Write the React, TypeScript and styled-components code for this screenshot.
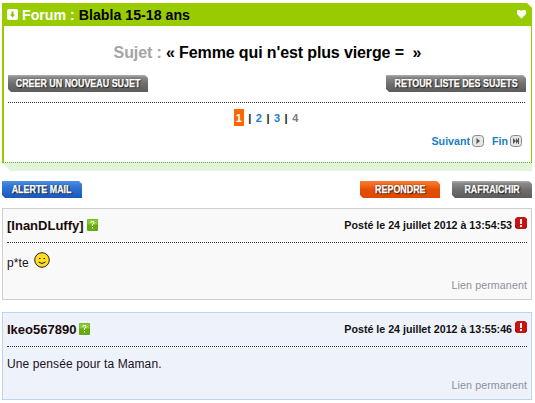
import React from 'react';
import styled, { createGlobalStyle } from 'styled-components';

const Global = createGlobalStyle`
  html, body { margin: 0; padding: 0; background: #fff; }
  body { font-family: "Liberation Sans", Arial, sans-serif; font-size: 12px; color: #000; }
`;

const Page = styled.div`
  width: 535px;
  height: 403px;
  overflow: hidden;
  padding: 3px 3px 0 2px;
  box-sizing: border-box;
`;

const Forum = styled.section`
  background: #e2f6db;
  padding-bottom: 8px;
  clip-path: polygon(0 0, calc(100% - 5px) 0, 100% 5px, 100% 100%, 8px 100%, 0 calc(100% - 8px));
`;

const ForumInner = styled.div`
  background: #fff;
  border-left: 2px solid #99cc00;
  border-right: 1px solid #99cc00;
  border-bottom: 1px dotted #33cc00;
  height: 160px;
  box-sizing: border-box;
`;

const ForumBar = styled.h1`
  margin: 0;
  height: 23px;
  margin-left: -2px;
  margin-right: -1px;
  padding: 0 6px 0 5px;
  background: #99cc00;
  display: flex;
  align-items: center;
  gap: 4px;
  font-size: 14.2px;
  font-weight: bold;
  color: #000;
`;

const Spacer = styled.span`
  flex: 1;
`;

const White = styled.span`
  color: #fff;
`;

const Subject = styled.h2`
  margin: 0;
  padding-top: 17px;
  height: 32px;
  box-sizing: content-box;
  text-align: center;
  font-size: 16px;
  line-height: 20px;
  font-weight: bold;
  letter-spacing: -0.12px;
  white-space: pre;
`;

const Grey = styled.span`
  color: #a5a5a5;
`;

const Row = styled.div<{ $gap?: number }>`
  display: flex;
  align-items: center;
  gap: ${(p) => p.$gap ?? 0}px;
`;

const ForumActions = styled(Row)`
  justify-content: space-between;
  padding: 0 5px 0 4px;
`;

const ActionBar = styled(Row)`
  margin-top: 10px;
  height: 17px;
`;

const Button = styled.a<{ $kind: 'grey' | 'orange' | 'blue'; $w: number }>`
  display: flex;
  align-items: center;
  justify-content: center;
  box-sizing: border-box;
  width: ${(p) => p.$w}px;
  height: 17px;
  flex: none;
  clip-path: polygon(0 0, calc(100% - 3px) 0, 100% 3px, 100% 100%, 3px 100%, 0 calc(100% - 3px));
  background: ${(p) =>
    p.$kind === 'grey'
      ? 'linear-gradient(#b0b0b0 0, #8c8c8c 2px, #6e6e6e 9px, #5c5c5c 100%)'
      : p.$kind === 'orange'
      ? 'linear-gradient(#ff7a33 0, #f26a1d 4px, #e04d00 9px, #e04a00 100%)'
      : 'linear-gradient(#4d8fe6 0, #2f74d6 6px, #1a57b8 100%)'};
`;

const ButtonLabel = styled.span`
  color: #fff;
  font-size: 10px;
  font-weight: bold;
  white-space: nowrap;
  transform: scaleX(0.89);
  -webkit-text-stroke: 0.25px #fff;
  text-shadow: 1px 1px 1px rgba(0, 0, 0, 0.85), 0 0 2px rgba(0, 0, 0, 0.5);
`;

const Rule = styled.hr`
  border: 0;
  border-top: 1px dotted #333;
  height: 0;
  margin: 0;
  flex: none;
`;

const ForumRule = styled(Rule)`
  margin: 10px 6px 0 4px;
`;

const Pager = styled(Row)`
  justify-content: center;
  margin-top: 6px;
  height: 17px;
  padding-right: 3px;
  font-size: 11px;
  font-weight: bold;
  color: #222;
  gap: 4.5px;
`;

const PageCurrent = styled.span`
  background: #ff6600;
  color: #fff;
  width: 10px;
  height: 17px;
  display: flex;
  align-items: center;
  justify-content: center;
`;

const PageLink = styled.a<{ $muted?: boolean }>`
  color: ${(p) => (p.$muted ? '#857a72' : '#1a80c4')};
`;

const Nav = styled(Row)`
  justify-content: flex-end;
  gap: 8px;
  margin-top: 7px;
  padding-right: 9px;
  height: 16px;
`;

const NavLink = styled.a`
  display: flex;
  align-items: center;
  gap: 2px;
  color: #1a80c4;
  font-size: 10.67px;
  font-weight: bold;
`;

const ButtonBar = styled(ActionBar)`
  gap: 12px;
`;

const Post = styled.article<{ $blue?: boolean }>`
  margin-top: ${(p) => (p.$blue ? 12 : 10)}px;
  box-sizing: border-box;
  height: ${(p) => (p.$blue ? 88 : 92)}px;
  width: 530px;
  padding: 0 4px 0 4px;
  border: 1px solid ${(p) => (p.$blue ? '#bcd4ec' : '#cfcfcf')};
  background: ${(p) => (p.$blue ? '#edf2fb' : '#f9f9f9')};
  display: flex;
  flex-direction: column;
`;

const PostHead = styled(Row)`
  flex: none;
  height: 33px;
  padding-top: 1px;
  box-sizing: border-box;
`;

const Author = styled.span`
  font-size: 13px;
  font-weight: bold;
  color: #1a0a0a;
  display: flex;
  align-items: center;
  gap: 3px;
  position: relative;
  top: -1px;
`;

const PostDate = styled.span`
  font-size: 10.67px;
  font-weight: bold;
  color: #111;
  display: flex;
  align-items: flex-start;
  gap: 3px;
  position: relative;
  top: -1px;
`;

const Body = styled.div<{ $pad: number }>`
  flex: none;
  padding-top: ${(p) => p.$pad}px;
  line-height: 14px;
  font-size: 12px;
  letter-spacing: 0.1px;
  color: #221020;
  display: flex;
  align-items: flex-start;
  gap: 5px;
`;

const Permalink = styled.a`
  align-self: flex-end;
  font-size: 10.67px;
  line-height: 12px;
  letter-spacing: 0.1px;
  color: #8f8f9c;
  margin-top: auto;
  margin-bottom: 8px;
`;

const ArrowDownIcon = () => (
  <svg width="11" height="11" viewBox="0 0 11 11">
    <rect width="11" height="11" rx="2" fill="#fff" />
    <path d="M4.5 2.500h2v3h1.600L5.500 8.500 2.900 5.500h1.600z" fill="#8fbf00" />
  </svg>
);

const HeartIcon = () => (
  <svg width="9" height="9" viewBox="0 0 9 9">
    <path d="M1 0h2l1.500 1L6 0h2l1 1v3L4.500 8.500 0 4V1z" fill="#fff" />
  </svg>
);

const HelpIcon = () => (
  <svg width="11" height="12" viewBox="0 0 11 12">
    <rect width="11" height="12" rx="1" fill="#66aa11" />
    <rect x="0.500" y="0.500" width="10" height="5" fill="#8ccc33" />
    <path d="M3.500 4V3l1-1h2l1 1v1.400L6 5.500V7H5V5l1.500-1V3h-2v1zM5 8h1v1.500H5z" fill="#fff" />
  </svg>
);

const AlertGlyph = styled.svg`
  margin-top: -2px;
`;

const AlertIcon = () => (
  <AlertGlyph width="12" height="12" viewBox="0 0 12 12">
    <path d="M2 0h8l2 2v8l-2 2H2l-2-2V2z" fill="#cc1111" />
    <path d="M0 8l2 2v2l-2-2zM12 8l-2 2v2l2-2z" fill="#881111" />
    <rect x="5" y="2" width="2" height="5" fill="#fff" />
    <rect x="5" y="8" width="2" height="2" fill="#fff" />
  </AlertGlyph>
);

const NavIcon = ({ end }: { end?: boolean }) => (
  <svg width="12" height="12" viewBox="0 0 12 12">
    <rect x="0.500" y="0.500" width="11" height="11" rx="3" fill="#e6e6e6" stroke="#8a8a8a" />
    {end ? (
      <path d="M3 3l3 3-3 3zM6 3l2.500 3L6 9zM8 3h1v6H8z" fill="#555" />
    ) : (
      <path d="M4.500 3l3.500 3-3.500 3z" fill="#555" />
    )}
  </svg>
);

const SmileyGlyph = styled.svg`
  margin-top: -4px;
`;

const Smiley = () => (
  <SmileyGlyph width="16" height="16" viewBox="0 0 16 16">
    <circle cx="8" cy="8" r="7.300" fill="#ffdd22" stroke="#222" strokeWidth="1" />
    <path d="M5 6.500h1.500M9.500 6.500H11" stroke="#222" strokeWidth="1.200" />
    <path d="M4.500 10q3.500 3 7 0" stroke="#222" fill="none" />
  </SmileyGlyph>
);

const App: React.FC = () => {
  return (
    <Page>
      <Global />
      <Forum>
        <ForumInner>
          <ForumBar>
            <ArrowDownIcon />
            <span>
              <White>Forum : </White>Blabla 15-18 ans
            </span>
            <Spacer />
            <HeartIcon />
          </ForumBar>
          <Subject>
            <Grey>Sujet : </Grey>« Femme qui n'est plus vierge =  »
          </Subject>
          <ForumActions>
            <Button $kind="grey" $w={140}><ButtonLabel>CREER UN NOUVEAU SUJET</ButtonLabel></Button>
            <Button $kind="grey" $w={140}><ButtonLabel>RETOUR LISTE DES SUJETS</ButtonLabel></Button>
          </ForumActions>
          <ForumRule />
          <Pager>
            <PageCurrent>1</PageCurrent>
            <span>|</span>
            <PageLink>2</PageLink>
            <span>|</span>
            <PageLink>3</PageLink>
            <span>|</span>
            <PageLink $muted>4</PageLink>
          </Pager>
          <Nav>
            <NavLink>Suivant <NavIcon /></NavLink>
            <NavLink>Fin <NavIcon end /></NavLink>
          </Nav>
        </ForumInner>
      </Forum>

      <ButtonBar>
        <Button $kind="blue" $w={80}><ButtonLabel>ALERTE MAIL</ButtonLabel></Button>
        <Spacer />
        <Button $kind="orange" $w={80}><ButtonLabel>REPONDRE</ButtonLabel></Button>
        <Button $kind="grey" $w={80}><ButtonLabel>RAFRAICHIR</ButtonLabel></Button>
      </ButtonBar>

      <Post>
        <PostHead>
          <Author>[InanDLuffy] <HelpIcon /></Author>
          <Spacer />
          <PostDate>Posté le 24 juillet 2012 à 13:54:53 <AlertIcon /></PostDate>
        </PostHead>
        <Rule />
        <Body $pad={13}>p*te <Smiley /></Body>
        <Permalink>Lien permanent</Permalink>
      </Post>

      <Post $blue>
        <PostHead>
          <Author>Ikeo567890 <HelpIcon /></Author>
          <Spacer />
          <PostDate>Posté le 24 juillet 2012 à 13:55:46 <AlertIcon /></PostDate>
        </PostHead>
        <Rule />
        <Body $pad={10}>Une pensée pour ta Maman.</Body>
        <Permalink>Lien permanent</Permalink>
      </Post>
    </Page>
  );
};

export default App;
